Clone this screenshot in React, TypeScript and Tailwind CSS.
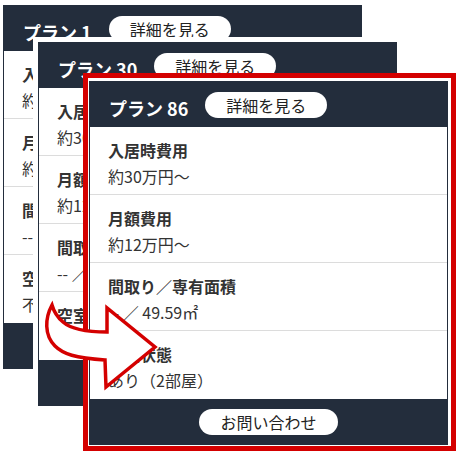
import React from "react";

type Row = { label: string; value: string };

const rows = (last: string): Row[] => [
  { label: "入居時費用", value: "約30万円～" },
  { label: "月額費用", value: "約12万円～" },
  { label: "間取り／専有面積", value: "-- ／ 49.59㎡" },
  { label: "空室状態", value: last },
];

const PlanCard = ({ plan, last }: { plan: string; last: string }) => {
  const items = rows(last);
  return (
    <div className="w-[359px] border border-[#232d3c] bg-white">
      <div className="flex h-[45px] items-center bg-[#232d3c] pl-[19px]">
        <span className="mt-[7px] text-[18px] font-bold leading-[24px] text-white">
          {plan}
        </span>
        <span className="ml-[17px] flex h-[26px] items-center rounded-full bg-white px-[21px] text-[16px] leading-none text-[#222]">
          詳細を見る
        </span>
      </div>

      {items.map((r, i) => (
        <div
          key={r.label}
          className={
            i < items.length - 1
              ? "h-[68px] border-b border-[#dcdcdc] px-[18px] pt-[10px]"
              : "h-[68px] px-[18px] pt-[10px]"
          }
        >
          <p className="text-[16px] font-bold leading-[26px] text-[#333]">{r.label}</p>
          <p className="text-[16px] leading-[26px] text-[#333]">{r.value}</p>
        </div>
      ))}

      <div className="flex h-[45px] items-center justify-center bg-[#232d3c]">
        <span className="flex h-[26px] items-center rounded-full bg-white px-[21px] text-[16px] leading-none text-[#222]">
          お問い合わせ
        </span>
      </div>
    </div>
  );
};

const App = () => {
  return (
    <div
      className="relative h-[454px] w-[456px] overflow-hidden bg-white"
      style={{ fontFamily: '"Noto Sans CJK JP", "Noto Sans", sans-serif' }}
    >
      <div className="absolute left-[3px] top-[5px]">
        <PlanCard plan="プラン 1" last="不明" />
      </div>

      <div className="absolute left-[33px] top-[37px] bg-white p-[5px]">
        <PlanCard plan="プラン 30" last="あり（1部屋）" />
      </div>

      <div className="absolute left-[83px] top-[73px] h-[378px] w-[373px] border-[5px] border-[#d40000] bg-white" />
      <div className="absolute left-[89px] top-[81px]">
        <PlanCard plan="プラン 86" last="あり（2部屋）" />
      </div>

      {/* curved arrow */}
      <svg
        className="pointer-events-none absolute left-0 top-0"
        width="456"
        height="454"
        viewBox="0 0 456 454"
      >
        <path
          d="M52 305 C45 318 44 335 55 346 C63 354 75 358 105 360 L106 387 L155 347 L107 308 L107 332 C90 332 72 330 63 322 C57 317 54 312 52 305 Z"
          fill="#fff"
          stroke="#d40000"
          strokeWidth="3.5"
          strokeLinejoin="miter"
        />
      </svg>
    </div>
  );
};

export default App;
